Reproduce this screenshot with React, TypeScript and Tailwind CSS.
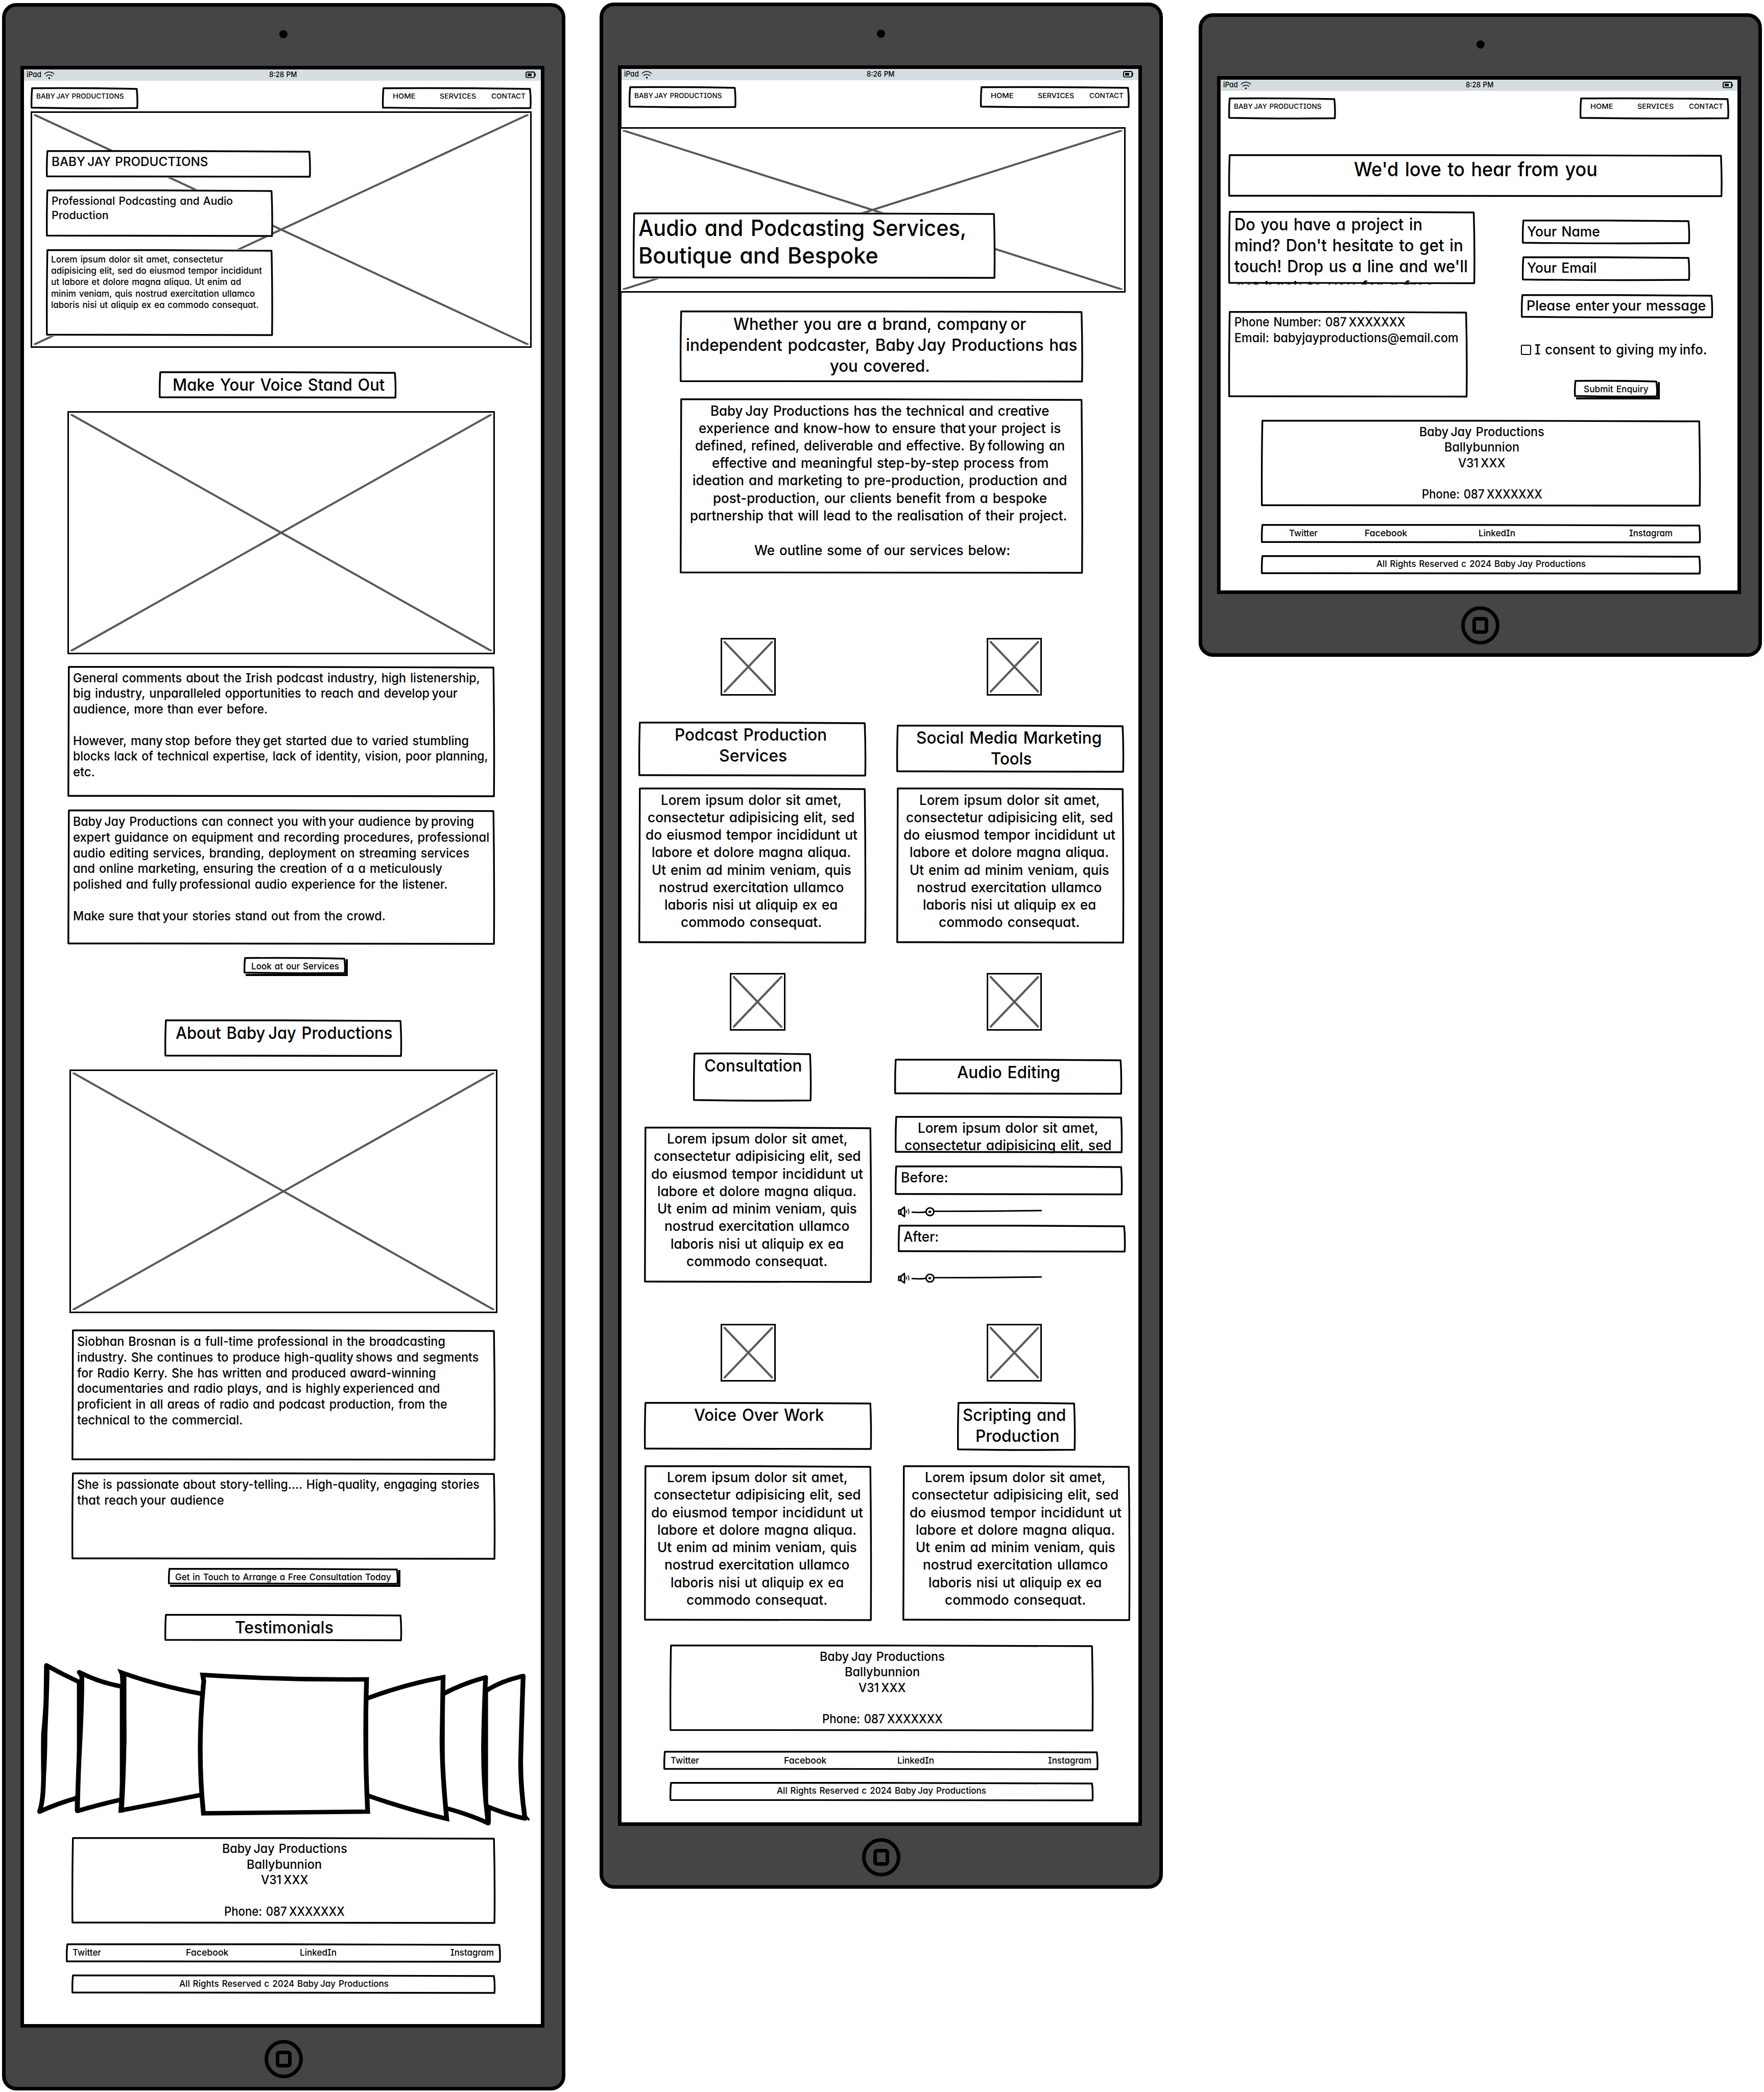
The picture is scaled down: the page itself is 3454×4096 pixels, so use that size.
import { useLayoutEffect, useRef, useState } from "react";
import type { ReactNode } from "react";

type TextLine = [text: string, width: number, shift?: number] | null;

/** One line of lettering, condensed or widened to the given width. */
function Fit({ text, width }: { text: string; width: number }) {
  const ref = useRef<HTMLSpanElement>(null);
  const [scale, setScale] = useState(1);
  useLayoutEffect(() => {
    if (ref.current) setScale((width + 1.5) / ref.current.offsetWidth);
  }, [text, width]);
  const parts = text.split(/(?<=(?<!Ja|dustr)y|BY|[17]) | (?=your)/);
  return (
    <span className="inline-block whitespace-nowrap" style={{ width }}>
      <span
        ref={ref}
        className="inline-block origin-left [word-spacing:0.08em]"
        style={{ transform: `scaleX(${scale})` }}
      >
        {parts.map((part, i) => (
          <span key={i}>
            {i > 0 && <span className="[word-spacing:-0.08em]"> </span>}
            {part}
          </span>
        ))}
      </span>
    </span>
  );
}

function Lines({ lines, center = false }: { lines: TextLine[]; center?: boolean }) {
  return (
    <>
      {lines.map((line, i) =>
        line ? (
          <div
            key={i}
            className={center ? "flex justify-center" : "flex"}
            style={line[2] ? { paddingRight: line[2] > 0 ? line[2] * 2 : 0, paddingLeft: line[2] < 0 ? -line[2] * 2 : 0 } : undefined}
          >
            <Fit text={line[0]} width={line[1]} />
          </div>
        ) : (
          <div key={i}>&nbsp;</div>
        ),
      )}
    </>
  );
}

/** Slightly uneven pen outline around its parent. */
function Frame() {
  const ref = useRef<SVGSVGElement>(null);
  const [size, setSize] = useState({ w: 100, h: 40 });
  useLayoutEffect(() => {
    const r = ref.current?.getBoundingClientRect();
    if (r) setSize({ w: r.width, h: r.height });
  }, []);
  const { w, h } = size;
  return (
    <svg ref={ref} className="pointer-events-none absolute inset-0 h-full w-full overflow-visible">
      <path
        d={`M2.8 1.8 C${w * 0.3} 1.2 ${w * 0.7} 1.8 ${w - 2.8} 3 C${w - 1.2} ${h * 0.4} ${w - 1.2} ${h * 0.7} ${w - 1.8} ${h - 2} C${w * 0.7} ${h - 1.2} ${w * 0.4} ${h - 1.2} 1.8 ${h - 2.8} C1.4 ${h * 0.6} 1.8 ${h * 0.3} 2.8 1.8 Z`}
        fill="none"
        stroke="#000"
        strokeWidth="3.4"
        strokeLinejoin="round"
      />
    </svg>
  );
}

function Box({ className = "", children }: { className?: string; children?: ReactNode }) {
  const padding = className.includes("pt-") ? "" : "pt-[8px]";
  return (
    <div className={`relative shrink-0 bg-white ${padding} ${className}`}>
      {children}
      <Frame />
    </div>
  );
}

function Picture({ className = "", children }: { className?: string; children?: ReactNode }) {
  return (
    <div className={`relative shrink-0 border-[3.5px] border-black bg-white ${className}`}>
      <svg className="absolute top-[3px] left-[3px] h-[calc(100%-6px)] w-[calc(100%-6px)]">
        <g stroke="#585858" strokeWidth="4">
          <line x1="0" y1="0" x2="100%" y2="100%" />
          <line x1="100%" y1="0" x2="0" y2="100%" />
        </g>
      </svg>
      <div className="relative">{children}</div>
    </div>
  );
}

function Button({ className = "", label, width }: { className?: string; label: string; width: number }) {
  return (
    <button
      className={`relative flex shrink-0 justify-center bg-white pt-[7px] text-[17.8px] leading-[1.25] shadow-[4px_4px_0_#000] ${className}`}
    >
      <Fit text={label} width={width} />
      <Frame />
    </button>
  );
}

function Wifi() {
  return (
    <svg viewBox="178 46 88 64" className="mt-px ml-[7px] h-[15px] w-[21px]" fill="none" stroke="#000" strokeWidth="6" strokeLinecap="round">
      <path d="M183 67 C202 45 242 45 261 67" />
      <path d="M197 84 C208 72 236 72 247 84" />
      <circle cx="222" cy="101" r="4.5" fill="#000" />
    </svg>
  );
}

function Battery() {
  return (
    <svg viewBox="0 0 20 13" className="h-[13px] w-[20px]">
      <rect x="1" y="1" width="16.5" height="10.6" rx="2.2" fill="none" stroke="#000" strokeWidth="1.9" />
      <rect x="4" y="3.8" width="8" height="5" fill="#000" />
      <path d="M18.8 4.2 V8.6" stroke="#000" strokeWidth="1.8" strokeLinecap="round" />
    </svg>
  );
}

function Device({ className, time, children }: { className: string; time: string; children: ReactNode }) {
  return (
    <div className={`flex w-[1103px] shrink-0 flex-col items-center rounded-[28px] border-[7px] border-black bg-[#454545] ${className}`}>
      <div className="flex h-[116px] shrink-0 items-center pb-[8px]">
        <div className="size-[16px] rounded-full bg-black" />
      </div>
      <div className="ml-[29px] flex w-[1026px] flex-1 flex-col self-start border-[7px] border-black bg-white">
        <div className="grid h-[22px] shrink-0 grid-cols-3 items-center bg-[#d6dde0] pr-[9px] pl-[5px] text-[14.8px] leading-none">
          <div className="flex items-center">
            <Fit text="iPad" width={27} />
            <Wifi />
          </div>
          <div className="flex justify-center pl-[5px]">
            <Fit text={time} width={52.5} />
          </div>
          <div className="flex justify-end">
            <Battery />
          </div>
        </div>
        {children}
      </div>
      <div className="flex h-[116px] shrink-0 items-center pt-[8px]">
        <div className="flex size-[75px] items-center justify-center rounded-full border-[7px] border-black">
          <div className="h-[33px] w-[31px] rounded-[7px] border-[7px] border-black" />
        </div>
      </div>
    </div>
  );
}

function Header({ className }: { className: string }) {
  return (
    <div className={`flex h-[42.5px] shrink-0 gap-[477px] text-[13.7px] leading-[1.25] ${className}`}>
      <Box className="w-[210.5px] pt-[9.5px] pl-[11px]">
        <Fit text="BABY JAY PRODUCTIONS" width={169.6} />
      </Box>
      <Box className="flex w-[292.5px] pt-[9.5px] pl-[21.5px]">
        <Fit text="HOME" width={42.8} />
        <div className="ml-[49px]">
          <Fit text="SERVICES" width={70} />
        </div>
        <div className="ml-[31px]">
          <Fit text="CONTACT" width={65.6} />
        </div>
      </Box>
    </div>
  );
}

const address: TextLine[] = [
  ["Baby Jay Productions", 243, -1],
  ["Ballybunnion", 146, -1],
  ["V31 XXX", 90.6, -1],
  null,
  ["Phone: 087 XXXXXXX", 234, -1],
];

function Address({ className }: { className: string }) {
  return (
    <Box className={`h-[170px] pt-[7.5px] text-[24.6px] leading-[1.25] ${className}`}>
      <Lines center lines={address} />
    </Box>
  );
}

function Social({ className, tight = false }: { className: string; tight?: boolean }) {
  return (
    <Box className={`flex h-[38px] pt-[7.5px] text-[17.8px] leading-[1.25] ${className}`}>
      <Fit text="Twitter" width={54} />
      <div className={tight ? "ml-[94.5px]" : "ml-[168px]"}>
        <Fit text="Facebook" width={82} />
      </div>
      <div className="ml-[140.5px]">
        <Fit text="LinkedIn" width={70.6} />
      </div>
      <div className="ml-[224.5px]">
        <Fit text="Instagram" width={84} />
      </div>
    </Box>
  );
}

function Copyright({ className }: { className: string }) {
  return (
    <Box className={`flex h-[38px] justify-center pt-[6.5px] text-[17.8px] leading-[1.25] ${className}`}>
      <Fit text="All Rights Reserved c 2024 Baby Jay Productions" width={409} />
    </Box>
  );
}

function Carousel({ className }: { className: string }) {
  return (
    <svg viewBox="100 312 1356 476" preserveAspectRatio="none" className={`shrink-0 ${className}`} fill="#fff" stroke="#000" strokeWidth="13" strokeLinejoin="round">
      <path d="M128 319 Q172 345 218 368 V705 Q160 722 109 747 Q120 715 120 640 Q119 560 120 520 Q127 440 127 400 Z" />
      <path d="M110 747 Q126 680 127 520 Q132 400 133 325" strokeWidth="7" fill="none" />
      <path d="M218 339 Q275 370 336 381 V711 Q270 727 213 745 Q215 640 219 560 Q226 420 225 350 Z" />
      <path d="M212 745 V700" strokeWidth="12" fill="none" />
      <path d="M334 340 Q440 380 558 403 V697 Q440 722 334 743 Q340 640 341 540 Q341 420 336 345 Z" strokeLinejoin="miter" />
      <path d="M341 345 V540 Q338 650 332 750" fill="none" />
      <path d="M1437 350 Q1375 365 1334 394 V730 Q1390 755 1442 767 Q1430 680 1430 600 Q1434 430 1437 350 Z" />
      <path d="M1452 770 L1438 752" strokeWidth="6" fill="none" strokeLinecap="round" />
      <path d="M1334 354 Q1270 372 1215 404 V734 Q1290 755 1341 781 Q1328 680 1328 560 Q1330 430 1334 354 Z" />
      <path d="M1341 730 V780" strokeWidth="14" fill="none" />
      <path d="M1217 354 Q1110 375 1005 417 V698 Q1110 738 1227 768 Q1215 640 1214 540 Z" strokeLinejoin="miter" />
      <path d="M557 347 Q780 362 1007 360 Q1001 560 1010 747 L559 752 Q541 560 560 365 Z" strokeLinejoin="miter" />
    </svg>
  );
}

function VolumeSlider({ className }: { className: string }) {
  return (
    <svg viewBox="40 80 1190 96" className={`h-[23px] w-[282.5px] shrink-0 ${className}`} fill="none" stroke="#000" strokeWidth="12" strokeLinecap="round" strokeLinejoin="round">
      <path d="M47 115 L65 113 L66 147 L48 147 Z" />
      <path d="M66 114 L94 89 Q98 130 94 168 L66 146" />
      <path d="M109 118 Q117 127 111 137" strokeWidth="7" />
      <path d="M125 106 Q136 126 129 144" strokeWidth="7" />
      <path d="M158 132 Q215 136 270 130" />
      <circle cx="305" cy="128" r="32" />
      <ellipse cx="304" cy="128" rx="6" ry="4" />
      <path d="M340 124 Q800 125 1225 118" />
    </svg>
  );
}

const lorem: TextLine[] = [
  ["Lorem ipsum dolor sit amet,", 352, 2.5],
  ["consectetur adipisicing elit, sed", 403.6, 2.5],
  ["do eiusmod tempor incididunt ut", 413, 2.5],
  ["labore et dolore magna aliqua.", 389, 2.5],
  ["Ut enim ad minim veniam, quis", 389, 2.5],
  ["nostrud exercitation ullamco", 361, 2.5],
  ["laboris nisi ut aliquip ex ea", 338, 2.5],
  ["commodo consequat.", 274.5, 2.5],
];

function Lorem({ className, lines = lorem }: { className: string; lines?: TextLine[] }) {
  return (
    <Box className={`w-[446px] pt-[7.5px] text-[27.3px] leading-[34.25px] ${className}`}>
      <Lines center lines={lines} />
    </Box>
  );
}

function HomePage() {
  return (
    <Device className="mt-[5.5px] h-[4087px]" time="8:28 PM">
      <Header className="mt-[13px] ml-[13.5px]" />
      <Picture className="mt-[5px] ml-[13px] h-[463px] w-[981px]">
        <div className="flex flex-col pt-[73px] pl-[27px]">
          <Box className="h-[54px] w-[518.5px] pt-[7px] pl-[11px] text-[24.6px] leading-[1.25]">
            <Fit text="BABY JAY PRODUCTIONS" width={304.5} />
          </Box>
          <Box className="mt-[23px] h-[93px] w-[444.5px] pt-[9px] pl-[11px] text-[21.9px] leading-[27.8px]">
            <Lines lines={[["Professional Podcasting and Audio", 353.7], ["Production", 110]]} />
          </Box>
          <Box className="mt-[24px] h-[170px] w-[444.5px] pt-[9px] pl-[10.5px] text-[17.8px] leading-[1.25]">
            <Lines
              lines={[
                ["Lorem ipsum dolor sit amet, consectetur", 335],
                ["adipisicing elit, sed do eiusmod tempor incididunt", 411.5],
                ["ut labore et dolore magna aliqua. Ut enim ad", 371],
                ["minim veniam, quis nostrud exercitation ullamco", 398],
                ["laboris nisi ut aliquip ex ea commodo consequat.", 405],
              ]}
            />
          </Box>
        </div>
      </Picture>
      <Box className="mt-[46px] ml-[264px] h-[53.5px] w-[465px] pt-[6px] text-[32.8px] leading-[1.25]">
        <Lines center lines={[["Make Your Voice Stand Out", 414, -1.5]]} />
      </Box>
      <Picture className="mt-[24px] ml-[85px] h-[476px] w-[837px]" />
      <Box className="mt-[23px] ml-[85px] h-[257px] w-[837px] pl-[11px] text-[24.6px] leading-[30.8px]">
        <Lines
          lines={[
            ["General comments about the Irish podcast industry, high listenership,", 795],
            ["big industry, unparalleled opportunities to reach and develop your", 751],
            ["audience, more than ever before.", 380],
            null,
            ["However, many stop before they get started due to varied stumbling", 774],
            ["blocks lack of technical expertise, lack of identity, vision, poor planning,", 811],
            ["etc.", 41],
          ]}
        />
      </Box>
      <Box className="mt-[24.5px] ml-[85px] h-[265px] w-[837px] pl-[11px] text-[24.6px] leading-[30.8px]">
        <Lines
          lines={[
            ["Baby Jay Productions can connect you with your audience by proving", 784],
            ["expert guidance on equipment and recording procedures, professional", 813.6],
            ["audio editing services, branding, deployment on streaming services", 774.4],
            ["and online marketing, ensuring the creation of a a meticulously", 721.7],
            ["polished and fully professional audio experience for the listener.", 731.6],
            null,
            ["Make sure that your stories stand out from the crowd.", 610.4],
          ]}
        />
      </Box>
      <Button className="mt-[24px] ml-[430px] h-[33px] w-[200px]" label="Look at our Services" width={170} />
      <Box className="mt-[89px] ml-[275.5px] h-[73.5px] w-[465px] pt-[5.5px] text-[32.8px] leading-[1.25]">
        <Lines center lines={[["About Baby Jay Productions", 423, -1]]} />
      </Box>
      <Picture className="mt-[24px] ml-[89px] h-[477px] w-[838px]" />
      <Box className="mt-[32.5px] ml-[93.5px] h-[257px] w-[830px] pl-[11px] text-[24.6px] leading-[30.8px]">
        <Lines
          lines={[
            ["Siobhan Brosnan is a full-time professional in the broadcasting", 719.5],
            ["industry. She continues to produce high-quality shows and segments", 784.4],
            ["for Radio Kerry. She has written and produced award-winning", 701],
            ["documentaries and radio plays, and is highly experienced and", 709],
            ["proficient in all areas of radio and podcast production, from the", 723],
            ["technical to the commercial.", 323],
          ]}
        />
      </Box>
      <Box className="mt-[23px] ml-[93.5px] h-[171px] w-[830px] pl-[11px] text-[24.6px] leading-[30.8px]">
        <Lines
          lines={[
            ["She is passionate about story-telling.... High-quality, engaging stories", 785.8],
            ["that reach your audience", 286],
          ]}
        />
      </Box>
      <Button
        className="mt-[15.5px] ml-[282px] h-[33px] w-[451px]"
        label="Get in Touch to Arrange a Free Consultation Today"
        width={421.5}
      />
      <Box className="mt-[57px] ml-[275.5px] h-[53.5px] w-[465px] pt-[6px] text-[32.8px] leading-[1.25]">
        <Lines center lines={[["Testimonials", 191, -1]]} />
      </Box>
      <Carousel className="mt-[42.5px] ml-[24px] h-[318.5px] w-[967px]" />
      <Address className="mt-[22.5px] ml-[93.5px] w-[830px]" />
      <Social className="mt-[38px] ml-[82px] w-[851.5px] pl-[13.5px]" />
      <Copyright className="mt-[23.5px] ml-[93.5px] w-[830px]" />
    </Device>
  );
}

function ServicesPage() {
  return (
    <Device className="mt-[4.5px] ml-[67px] h-[3693px]" time="8:26 PM">
      <Header className="mt-[12.5px] ml-[14.5px]" />
      <Picture className="mt-[37.5px] ml-[-4px] h-[324px] w-[991px]">
        <div className="pt-[163.5px] pl-[23px]">
          <Box className="h-[130px] w-[710px] pt-[4px] pl-[11.5px] text-[43.7px] leading-[54.8px]">
            <Lines lines={[["Audio and Podcasting Services,", 641], ["Boutique and Bespoke", 468]]} />
          </Box>
        </div>
      </Picture>
      <Box className="mt-[35px] ml-[114px] h-[141px] w-[789.5px] pt-[6px] text-[32.8px] leading-[41px]">
        <Lines
          center
          lines={[
            ["Whether you are a brand, company or", 572, 3.5],
            ["independent podcaster, Baby Jay Productions has", 765],
            ["you covered.", 194, 3.5],
          ]}
        />
      </Box>
      <Box className="mt-[31px] ml-[114px] h-[343.5px] w-[789.5px] pt-[7.5px] text-[27.3px] leading-[34.2px]">
        <Lines
          center
          lines={[
            ["Baby Jay Productions has the technical and creative", 662, 3],
            ["experience and know-how to ensure that your project is", 708, 3],
            ["defined, refined, deliverable and effective. By following an", 723, 3],
            ["effective and meaningful step-by-step process from", 657.5, 3],
            ["ideation and marketing to pre-production, production and", 731.6, 3],
            ["post-production, our clients benefit from a bespoke", 653, 3],
            ["partnership that will lead to the realisation of their project.", 736.6, 6],
            null,
            ["We outline some of our services below:", 500, -1.5],
          ]}
        />
      </Box>
      <div className="mt-[125px] flex shrink-0">
        <div className="flex w-[505px] flex-col">
          <Picture className="ml-[194px] h-[113px] w-[108.5px]" />
          <Box className="mt-[51px] ml-[33px] h-[107.5px] w-[446px] pt-[5px] text-[32.8px] leading-[41px]">
            <Lines center lines={[["Podcast Production", 296.6, 3.5], ["Services", 132, -1]]} />
          </Box>
          <Lorem className="mt-[22px] ml-[33px] h-[305.5px]" />
          <Picture className="mt-[57px] ml-[212.5px] h-[113px] w-[108.5px]" />
          <Box className="mt-[43px] ml-[140px] h-[95.5px] w-[232px] pt-[5.5px] text-[32.8px] leading-[41px]">
            <Lines center lines={[["Consultation", 190, -1.5]]} />
          </Box>
          <Lorem className="mt-[49.5px] ml-[44.5px] h-[306px]" />
          <Picture className="mt-[80px] ml-[194px] h-[113px] w-[108.5px]" />
          <Box className="mt-[40px] ml-[44.5px] h-[94px] w-[446px] pt-[5px] text-[32.8px] leading-[41px]">
            <Lines center lines={[["Voice Over Work", 252.4, -1]]} />
          </Box>
          <Lorem className="mt-[30px] ml-[44.5px] h-[305px]" />
        </div>
        <div className="flex flex-col">
          <Picture className="ml-[210px] h-[113px] w-[108.5px]" />
          <Box className="mt-[57px] ml-[33.5px] h-[94px] w-[446px] pt-[5px] text-[32.8px] leading-[41px]">
            <Lines center lines={[["Social Media Marketing", 361.5, 3.5], ["Tools", 78.4, -1]]} />
          </Box>
          <Lorem className="mt-[29.5px] ml-[33.5px] h-[305.5px]" />
          <Picture className="mt-[57px] ml-[210px] h-[113px] w-[108.5px]" />
          <Box className="mt-[55.5px] ml-[29px] h-[70.5px] w-[446px] pt-[6px] text-[32.8px] leading-[41px]">
            <Lines center lines={[["Audio Editing", 201, -1]]} />
          </Box>
          <Lorem className="mt-[41px] ml-[30.5px] h-[73px] overflow-hidden" lines={lorem.slice(0, 2)} />
          <Box className="mt-[24px] ml-[30.5px] h-[58.5px] w-[446px] pt-[7px] pl-[12px] text-[27.3px] leading-[34.2px]">
            <Fit text="Before:" width={90.6} />
          </Box>
          <VolumeSlider className="mt-[21px] ml-[36px]" />
          <Box className="mt-[14px] ml-[36.5px] h-[54.5px] w-[446px] pt-[7px] pl-[10.5px] text-[27.3px] leading-[34.2px]">
            <Fit text="After:" width={68} />
          </Box>
          <VolumeSlider className="mt-[38px] ml-[36px]" />
          <Picture className="mt-[78px] ml-[210px] h-[113px] w-[108.5px]" />
          <Box className="mt-[40px] ml-[152px] h-[95.5px] w-[232px] pt-[5px] text-[32.8px] leading-[41px]">
            <Lines center lines={[["Scripting and", 201, 4], ["Production", 163.3, -2]]} />
          </Box>
          <Lorem className="mt-[28.5px] ml-[45px] h-[305px]" />
        </div>
      </div>
      <Address className="mt-[46.5px] ml-[94px] w-[830px]" />
      <Social className="mt-[38px] ml-[82.5px] w-[851.5px] pl-[13.5px]" />
      <Copyright className="mt-[22.5px] ml-[94px] w-[830px]" />
    </Device>
  );
}

function ContactPage() {
  return (
    <Device className="mt-[25.5px] ml-[70.5px] h-[1260px]" time="8:28 PM">
      <Header className="mt-[13px] ml-[15px]" />
      <Box className="mt-[69px] ml-[15px] h-[84px] w-[967.5px] pt-[5px] text-[38.3px] leading-[48px]">
        <Lines center lines={[["We'd love to hear from you", 475.6]]} />
      </Box>
      <div className="mt-[27px] flex h-[369px] shrink-0">
        <div className="ml-[15px] flex w-[572.5px] flex-col">
          <Box className="h-[143.5px] w-[483.5px] overflow-hidden pt-[5.5px] pl-[12px] text-[32.8px] leading-[41px]">
            <Lines
              lines={[
                ["Do you have a project in", 367],
                ["mind? Don't hesitate to get in", 446],
                ["touch! Drop us a line and we'll", 455.7],
                ["get back to you for a free", 390],
              ]}
            />
          </Box>
          <Box className="mt-[52px] h-[169.5px] w-[468.5px] pt-[6.5px] pl-[11.5px] text-[24.6px] leading-[30.8px]">
            <Lines
              lines={[
                ["Phone Number: 087 XXXXXXX", 333],
                ["Email: babyjayproductions@email.com", 437],
              ]}
            />
          </Box>
        </div>
        <div className="flex flex-col text-[27.3px] leading-[34.2px]">
          <Box className="mt-[17px] ml-[2px] h-[48px] w-[329px] pt-[6.5px] pl-[10.5px]">
            <Fit text="Your Name" width={141} />
          </Box>
          <Box className="mt-[23.5px] ml-[2px] h-[48px] w-[329px] pt-[6px] pl-[10.5px]">
            <Fit text="Your Email" width={135} />
          </Box>
          <Box className="mt-[26.5px] h-[47px] w-[376px] pt-[5.5px] pl-[11px]">
            <Fit text="Please enter your message" width={349.4} />
          </Box>
          <div className="mt-[45px] flex h-[34px] items-center gap-[7px]">
            <div className="size-[20px] rounded-[3px] border-[2.5px] border-black" />
            <Fit text="I consent to giving my info." width={336} />
          </div>
          <Button className="mt-[42px] ml-[104px] h-[34px] w-[164px]" label="Submit Enquiry" width={125.5} />
        </div>
      </div>
      <Address className="mt-[40px] ml-[79px] w-[861px]" />
      <Social tight className="mt-[33.5px] ml-[79px] w-[861px] pl-[54.5px]" />
      <Copyright className="mt-[23px] ml-[79px] w-[861px]" />
    </Device>
  );
}

export default function App() {
  return (
    <div className="flex h-[4096px] w-[3454px] items-start overflow-hidden bg-white pl-[3.5px] font-['Inter',sans-serif] font-medium text-black [font-feature-settings:'cv11','cv08']">
      <HomePage />
      <ServicesPage />
      <ContactPage />
    </div>
  );
}
